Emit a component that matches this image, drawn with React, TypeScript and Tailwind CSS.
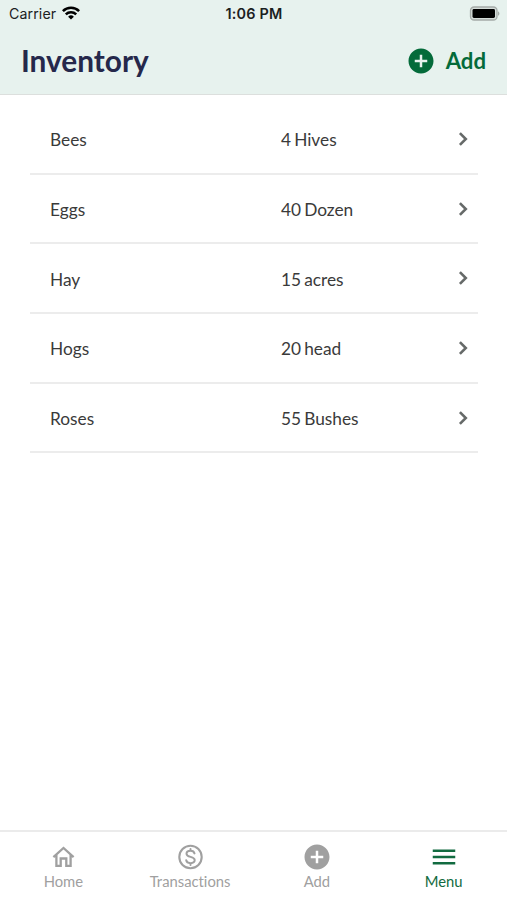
import React from 'react';
import { MdAddCircle, MdMenu } from 'react-icons/md';

const items = [
  { name: 'Bees', amount: '4 Hives' },
  { name: 'Eggs', amount: '40 Dozen' },
  { name: 'Hay', amount: '15 acres' },
  { name: 'Hogs', amount: '20 head' },
  { name: 'Roses', amount: '55 Bushes' },
];

function ChevronIcon({ className }: { className?: string }) {
  return (
    <svg className={className} viewBox="0 0 28 28" fill="none" stroke="currentColor" strokeWidth="2.6">
      <path d="m10.900 8.100 5.900 5.900-5.900 5.900" />
    </svg>
  );
}

function HomeIcon({ className }: { className?: string }) {
  return (
    <svg className={className} viewBox="0 0 30 30" fill="none" stroke="currentColor" strokeWidth="2.3">
      <path d="M5.4 15.1 15.5 6l10.100 9.100M8.400 13v10.900h4.300v-7.400h5.600v7.400h4.300V13" />
    </svg>
  );
}

function DollarIcon({ className }: { className?: string }) {
  return (
    <svg className={className} viewBox="0 0 30 30" fill="none" stroke="currentColor" strokeWidth="2.1">
      <circle cx="15.5" cy="15" r="11.2" />
      <path
        strokeLinecap="round"
        strokeWidth="2"
        d="M19.500 11.400c-.4-1.700-1.900-2.700-4-2.700-2.300 0-4 1.100-4 3 0 4.300 8.200 2 8.200 6.400 0 1.900-1.800 3.100-4.200 3.100-2.300 0-4-1.100-4.300-3M15.500 7v1.700M15.500 21.200v1.800"
      />
    </svg>
  );
}

const tabs = [
  { label: 'Home', icon: HomeIcon },
  { label: 'Transactions', icon: DollarIcon },
  { label: 'Add', icon: MdAddCircle },
  { label: 'Menu', icon: MdMenu, active: true },
];

function StatusBar() {
  return (
    <div className="grid h-[27px] grid-cols-3 items-center pl-[9px] pr-[7px] font-['Inter','Liberation_Sans',sans-serif] text-[#1b211f]">
      <div className="flex items-center gap-[6px]">
        <span className="pt-px text-[14.2px] leading-none tracking-[0.1px]">Carrier</span>
        <svg className="h-[14px] w-[18px] text-black" viewBox="0 0 18 14" fill="none" stroke="currentColor">
          <path strokeWidth="2.6" d="M0.9 5.1a11.6 11.6 0 0 1 16.2 0" />
          <path strokeWidth="2.5" d="M3.8 8.3a7.4 7.4 0 0 1 10.4 0" />
          <path stroke="none" fill="currentColor" d="M9 13.6 6.1 10.7a4.1 4.1 0 0 1 5.8 0z" />
        </svg>
      </div>
      <span className="-ml-px pt-[2px] text-center text-[14.4px] font-semibold leading-none tracking-[0.2px]">1:06 PM</span>
      <svg className="h-[15px] w-[31px] justify-self-end" viewBox="0 0 31 15">
        <rect x="1.5" y="1" width="26.5" height="13" rx="3.6" fill="#d5ddd9" stroke="#a5aba8" strokeWidth="1.3" />
        <rect x="3.5" y="3" width="22.5" height="9" rx="1.4" fill="#000" />
        <path d="M29 5.2c1.9.8 1.9 3.8 0 4.6z" fill="#a5aba8" />
      </svg>
    </div>
  );
}

export default function App() {
  return (
    <div className="flex h-[900px] w-[507px] flex-col bg-white font-['Lato',sans-serif]">
      <header className="h-[95px] border-b border-[#dcdfdd] bg-[#e7f2ee]">
        <StatusBar />
        <div className="flex h-[67px] items-center justify-between px-[21px]">
          <h1 className="text-[29.8px] font-bold leading-none text-[#25284b]">Inventory</h1>
          <button className="flex items-center gap-[10px] text-[#046b3a]">
            <MdAddCircle className="size-[30px]" />
            <span className="pt-px text-[22.2px] font-bold leading-none">Add</span>
          </button>
        </div>
      </header>

      <main className="flex-1 pl-[30px] pr-[29px] pt-[10px]">
        {items.map((item) => (
          <div
            key={item.name}
            className="flex h-[69.7px] items-center border-b-2 border-[#ececec] pl-[20px] pr-px text-[17.3px] text-[#3a3a3a]"
          >
            <span className="w-[231px] pt-[3px]">{item.name}</span>
            <span className="flex-1 pt-[3px] [word-spacing:-1.3px]">{item.amount}</span>
            <ChevronIcon className="size-[28px] text-[#666a69]" />
          </div>
        ))}
      </main>

      <nav className="grid h-[70px] grid-cols-4 border-t-2 border-[#ebebeb]">
        {tabs.map(({ label, icon: Icon, active }) => (
          <button
            key={label}
            className={`flex flex-col items-center pt-[10px] ${active ? 'text-[#126b40]' : 'text-[#a0a0a0]'}`}
          >
            <Icon className="size-[30px]" />
            <span className="text-[14.8px] leading-[18px] [font-variant-ligatures:none]">{label}</span>
          </button>
        ))}
      </nav>
    </div>
  );
}
